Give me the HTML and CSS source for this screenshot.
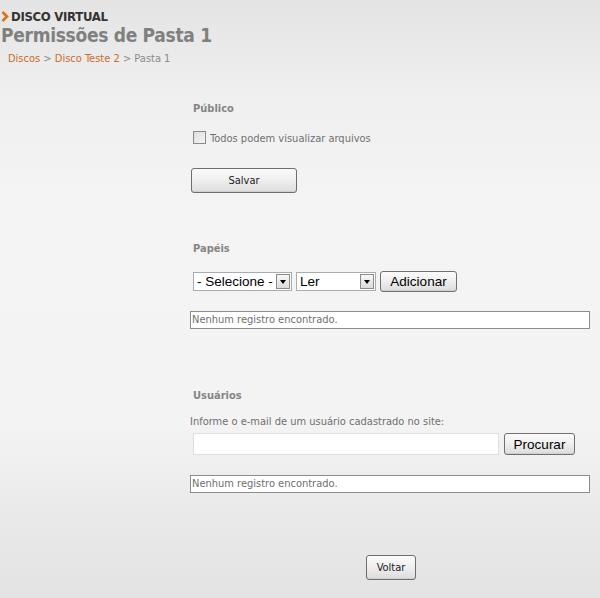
FILE: index.html
```
<!DOCTYPE html>
<html lang="pt">
<head>
<meta charset="utf-8">
<title>Permissões de Pasta 1</title>
<link rel="stylesheet" href="styles.css">
</head>
<body>
<header class="top">
  <div class="kicker"><svg class="chev" width="8" height="11" viewBox="0 0 8 11"><path d="M1.5 1 L6 5.5 L1.5 10" fill="none" stroke="#e07010" stroke-width="2.6"/></svg><span>DISCO VIRTUAL</span></div>
  <h1 class="title">Permissões de Pasta 1</h1>
  <nav class="crumbs"><a class="crumb-link">Discos</a> &gt; <a class="crumb-link">Disco Teste 2</a> &gt; Pasta 1</nav>
</header>
<main class="content">
  <h2 class="heading h-publico">Público</h2>
  <label class="check"><span class="box"></span>Todos podem visualizar arquivos</label>
  <div class="row-salvar"><button class="btn btn-salvar">Salvar</button></div>

  <h2 class="heading h-papeis">Papéis</h2>
  <div class="row-papeis">
    <div class="sel sel-1"><span class="sel-text">- Selecione -</span><span class="sel-arrow"></span></div>
    <div class="sel sel-2"><span class="sel-text">Ler</span><span class="sel-arrow"></span></div>
    <button class="btn btn-sys btn-add">Adicionar</button>
  </div>
  <div class="result result-1">Nenhum registro encontrado.</div>

  <h2 class="heading h-usuarios">Usuários</h2>
  <p class="hint">Informe o e-mail de um usuário cadastrado no site:</p>
  <div class="row-search">
    <input class="email" type="text">
    <button class="btn btn-sys btn-find">Procurar</button>
  </div>
  <div class="result result-2">Nenhum registro encontrado.</div>

  <div class="row-back"><button class="btn btn-back">Voltar</button></div>
</main>
</body>
</html>
```
FILE: styles.css
```
html, body { margin: 0; padding: 0; }
body {
  width: 600px;
  height: 598px;
  overflow: hidden;
  font-family: "DejaVu Sans Condensed", "DejaVu Sans", sans-serif;
  font-size: 11px;
  color: #808080;
  background: linear-gradient(to bottom, #e4e4e4 0px, #efefef 90px, #f4f4f4 200px, #f3f3f3 430px, #e9e9e9 520px, #e3e3e3 598px);
}
.top { padding-top: 9px; }
.kicker {
  display: flex;
  align-items: center;
  height: 14px;
  padding-left: 1px;
  font-weight: bold;
  font-size: 13px;
  color: #333;
  letter-spacing: -0.3px;
}
.chev { margin-right: 2px; }
.title {
  margin: 0;
  height: 24px;
  line-height: 24px;
  font-size: 19px;
  font-weight: bold;
  color: #808080;
  padding-left: 1px;
  letter-spacing: -0.3px;
}
.crumbs {
  margin-top: 5px;
  padding-left: 8px;
  line-height: 14px;
  font-size: 11px;
  color: #8a8a8a;
}
.crumb-link { color: #cc6a2a; }

.content {
  padding-left: 190px;
  width: 400px;
  display: flex;
  flex-direction: column;
  align-items: flex-start;
}
.heading {
  margin: 0;
  padding-left: 3px;
  font-size: 11px;
  line-height: 14px;
  font-weight: bold;
  color: #858585;
}
.h-publico { margin-top: 36px; }
.check {
  margin-top: 15px;
  padding-left: 3px;
  display: flex;
  align-items: center;
  height: 14px;
  color: #707070;
}
.box {
  width: 11px;
  height: 11px;
  border: 1px solid #8a8a8a;
  background: linear-gradient(135deg, #dcdcdc, #f6f6f6);
  margin-right: 4px;
  margin-top: -2px;
}
.row-salvar { margin-top: 23px; padding-left: 1px; }
.btn {
  font-family: "DejaVu Sans Condensed", "DejaVu Sans", sans-serif;
  font-size: 11px;
  color: #222;
  border: 1px solid #6e6e6e;
  border-radius: 3px;
  background: linear-gradient(to bottom, #fbfbfb 0%, #f0f0f0 45%, #dcdcdc 100%);
  padding: 0;
  box-shadow: inset 0 -1px 0 #cfcfcf;
}
.btn-salvar { width: 106px; height: 25px; }

.h-papeis { margin-top: 49px; }
.row-papeis {
  margin-top: 15px;
  padding-left: 3px;
  display: flex;
  align-items: center;
  height: 21px;
}
.sel {
  display: flex;
  align-items: center;
  border: 1px solid #a5acb2;
  background: #fff;
  box-sizing: border-box;
  height: 19px;
  font-family: "Liberation Sans", Arial, sans-serif;
  font-size: 13.5px;
  color: #000;
}
.sel-text { flex: 1; padding-left: 3px; white-space: nowrap; }
.sel-arrow {
  width: 14px;
  height: 15px;
  margin-right: 1px;
  border: 1px solid #8a8a8a;
  box-sizing: border-box;
  background: linear-gradient(to bottom, #f7f7f7, #dcdcdc);
  position: relative;
}
.sel-arrow::after {
  content: "";
  position: absolute;
  left: 3px;
  top: 5px;
  border-left: 3.5px solid transparent;
  border-right: 3.5px solid transparent;
  border-top: 4px solid #000;
}
.sel-1 { width: 99px; }
.sel-2 { width: 80px; margin-left: 4px; }
.btn-sys {
  font-family: "Liberation Sans", Arial, sans-serif;
  font-size: 13.5px;
  color: #000;
  border-color: #707070;
}
.btn-add { margin-left: 4px; width: 77px; height: 21px; }

.result {
  box-sizing: border-box;
  width: 400px;
  height: 18px;
  border: 1px solid #8c8c8c;
  background: #fff;
  padding-left: 1px;
  line-height: 16px;
  color: #707070;
  font-size: 11px;
}
.result-1 { margin-top: 19px; }

.h-usuarios { margin-top: 60px; }
.hint {
  margin: 12px 0 0 0;
  line-height: 14px;
  color: #707070;
}
.row-search {
  margin-top: 4px;
  padding-left: 3px;
  display: flex;
  align-items: center;
  height: 22px;
}
.email {
  box-sizing: border-box;
  width: 306px;
  height: 22px;
  border: 1px solid #dedede;
  background: #fff;
  margin: 0;
  padding: 0;
}
.btn-find { margin-left: 5px; width: 71px; height: 22px; }
.result-2 { margin-top: 20px; }

.row-back {
  margin-top: 62px;
  width: 400px;
  display: flex;
  justify-content: center;
}
.btn-back { width: 50px; height: 25px; margin-left: 2px; }
```
